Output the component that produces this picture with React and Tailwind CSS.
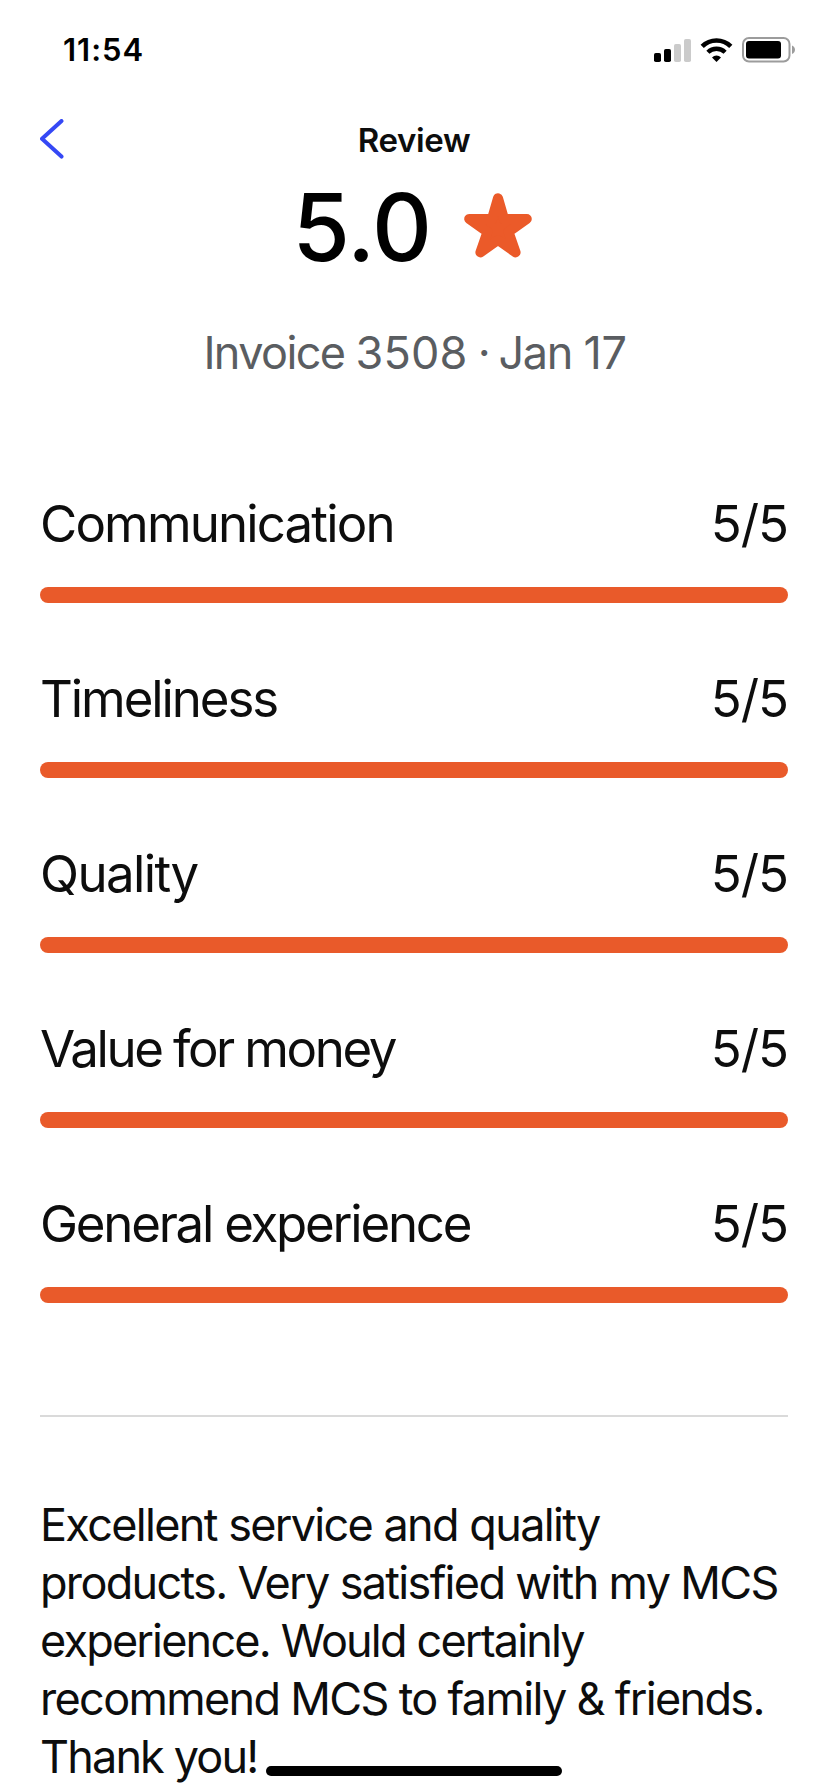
const ratings = [
  { label: 'Communication', score: 5, spacing: 'tracking-[-1.86px]' },
  { label: 'Timeliness', score: 5, spacing: 'tracking-[-2.1px]' },
  { label: 'Quality', score: 5, spacing: 'tracking-[-1.6px]' },
  { label: 'Value for money', score: 5, spacing: 'tracking-[-2.4px] [word-spacing:-0.5px]' },
  { label: 'General experience', score: 5, spacing: 'tracking-[-2.25px]' },
]

const reviewLines = [
  { text: 'Excellent service and quality', spacing: 'tracking-[-1.69px] [word-spacing:0.5px]' },
  { text: 'products. Very satisfied with my MCS', spacing: 'tracking-[-1.68px]' },
  { text: 'experience. Would certainly', spacing: 'tracking-[-1.82px]' },
  { text: 'recommend MCS to family & friends.', spacing: 'tracking-[-1.67px]' },
  { text: 'Thank you!', spacing: 'tracking-[-1.85px]' },
]

export default function App() {
  return (
    <div className="relative w-[828px] h-[1792px] overflow-hidden bg-white text-[#0d0d0d] font-['Inter',sans-serif]">
      <StatusBar />
      <Header />

      <main className="px-10">
        {/* Score */}
        <div className="flex items-center justify-center h-[76px]">
          <span className="mt-0.5 -ml-[3px] mr-[33px] text-[93px] leading-[76px] font-medium text-black tracking-[-0.7px]">5.0</span>
          <Star />
        </div>
        <div className="mt-[59px] h-[60px] pl-0.5 text-center text-[45px] leading-[60px] text-[#5a5d61] whitespace-nowrap">
          <span className="tracking-[-1.6px]">Invoice </span>
          <span className="tracking-[0.2px]">3508</span>
          <span className="tracking-[-2.5px]"> · </span>
          <span className="tracking-[-1.3px]">Jan </span>
          <span className="tracking-[-0.3px]">17</span>
        </div>

        {/* Ratings */}
        <div className="mt-[109px] flex flex-col gap-16">
          {ratings.map((r) => (
            <RatingRow key={r.label} {...r} />
          ))}
        </div>

        <div className="mt-[112px] h-0.5 bg-[#dadada]" />

        {/* Comment */}
        <div className="mt-[79px] text-[45px] leading-[58px] whitespace-nowrap">
          {reviewLines.map((l) => (
            <div key={l.text} className={l.spacing}>{l.text}</div>
          ))}
        </div>
      </main>

      {/* Home indicator */}
      <div className="absolute left-[266px] top-[1766px] w-[296px] h-2.5 rounded-full bg-black" />
    </div>
  )
}

function StatusBar() {
  return (
    <div className="flex items-center justify-between h-[92px] pt-2 pl-[63px] pr-8 text-black">
      <span className="text-[31px] leading-[38px] font-semibold tracking-[1px]">11:54</span>
      <div className="flex items-center">
        <svg width="37" height="24" viewBox="0 0 37 24">
          <rect x="0" y="15" width="7" height="9" rx="1.8" />
          <rect x="10" y="11" width="7" height="13" rx="1.8" />
          <rect x="20" y="6" width="7" height="18" rx="1.8" fill="#cbcbcb" />
          <rect x="30" y="1" width="7" height="23" rx="1.8" fill="#cbcbcb" />
        </svg>
        <svg className="ml-[9px]" width="33" height="24" viewBox="0 0 33 24" fill="none" stroke="#000">
          <path d="M2.2 8.4 A20.4 20.4 0 0 1 30.8 8.4" strokeWidth="4.6" />
          <path d="M7.9 14.3 A12.2 12.2 0 0 1 25.1 14.3" strokeWidth="4.4" />
          <path d="M16.5 24 L12 19.4 A6.4 6.4 0 0 1 21 19.4 Z" fill="#000" stroke="none" />
        </svg>
        <svg className="ml-[9px]" width="54" height="26" viewBox="0 0 54 26">
          <rect x="1" y="1" width="46.5" height="23.5" rx="6" fill="none" stroke="#9c9c9c" strokeWidth="2" />
          <rect x="4" y="4" width="35" height="17.5" rx="3" />
          <path d="M50 8.5 C52 9.3 53 11 53 12.7 C53 14.5 52 16.2 50 17 Z" fill="#9c9c9c" />
        </svg>
      </div>
    </div>
  )
}

function Header() {
  return (
    <header className="grid grid-cols-[1fr_auto_1fr] items-center h-24 px-10">
      <svg className="mb-0.5" width="24" height="40" viewBox="0 0 24 40" fill="none" stroke="#3548f5" strokeWidth="4" strokeLinecap="round" strokeLinejoin="round">
        <path d="M21.5 2 L2 19.8 L21.5 37.6" />
      </svg>
      <h1 className="text-[33px] leading-[40px] font-semibold tracking-[-0.35px]">Review</h1>
    </header>
  )
}

function Star() {
  return (
    <svg className="mb-0.5" width="68" height="65" viewBox="0 0 68 65" fill="#eb5a29" stroke="#eb5a29" strokeWidth="10" strokeLinejoin="round">
      <path d="M34 5.2 L40 26 L62.8 26 L44.5 38.9 L51.6 59.4 L34 47 L16.4 59.4 L23.5 38.9 L5.2 26 L28 26 Z" />
    </svg>
  )
}

function RatingRow({ label, score, spacing }) {
  return (
    <div>
      <div className="flex items-center justify-between h-16 text-[51px] leading-[64px] whitespace-nowrap">
        <span className={spacing}>{label}</span>
        <span className="tracking-[-0.02em]">{score}/5</span>
      </div>
      <div className="mt-[31px] h-4">
        <div className="h-4 rounded-full bg-[#e95a2a]" style={{ width: `${(score / 5) * 100}%` }} />
      </div>
    </div>
  )
}
